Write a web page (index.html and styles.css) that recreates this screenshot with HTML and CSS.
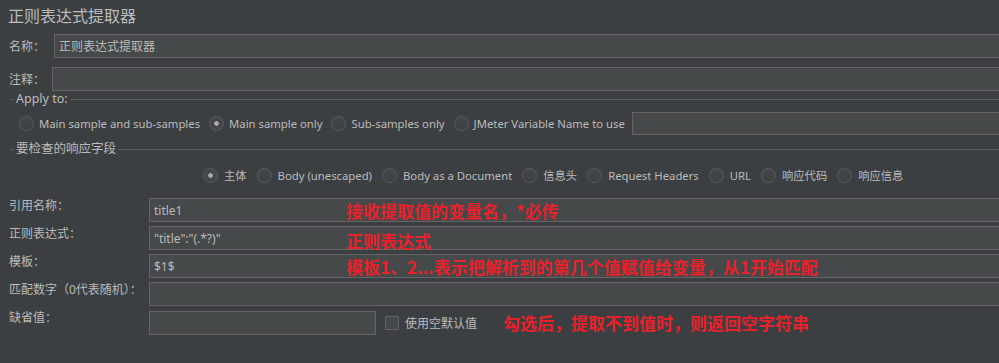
FILE: index.html
```html
<!DOCTYPE html>
<html lang="zh-CN">
<head>
    <meta charset="UTF-8">
    <title>正则表达式提取器</title>
    <link rel="stylesheet" href="styles.css">
</head>
<body>
    <div class="panel">
        <h1 class="title">正则表达式提取器</h1>

        <div class="name-row">
            <label>名称：</label>
            <input class="field" type="text" value="正则表达式提取器">
        </div>
        <div class="name-row comment">
            <label>注释：</label>
            <input class="field" type="text">
        </div>

        <fieldset class="group">
            <legend>Apply to:</legend>
            <div class="radio-row apply">
                <label class="radio"><input type="radio" name="apply">Main sample and sub-samples</label>
                <label class="radio"><input type="radio" name="apply" checked>Main sample only</label>
                <label class="radio"><input type="radio" name="apply">Sub-samples only</label>
                <label class="radio"><input type="radio" name="apply">JMeter Variable Name to use</label>
                <input class="field var-name" type="text">
            </div>
        </fieldset>

        <fieldset class="group">
            <legend>要检查的响应字段</legend>
            <div class="radio-row fields">
                <label class="radio"><input type="radio" name="field" checked>主体</label>
                <label class="radio"><input type="radio" name="field">Body (unescaped)</label>
                <label class="radio"><input type="radio" name="field">Body as a Document</label>
                <label class="radio"><input type="radio" name="field">信息头</label>
                <label class="radio"><input type="radio" name="field">Request Headers</label>
                <label class="radio"><input type="radio" name="field">URL</label>
                <label class="radio"><input type="radio" name="field">响应代码</label>
                <label class="radio"><input type="radio" name="field">响应信息</label>
            </div>
        </fieldset>

        <div class="form">
            <label>引用名称：</label>
            <div class="cell">
                <input class="field" type="text" value="title1">
                <span class="note">接收提取值的变量名，*必传</span>
            </div>

            <label>正则表达式：</label>
            <div class="cell">
                <input class="field" type="text" value='"title":"(.*?)"'>
                <span class="note low">正则表达式</span>
            </div>

            <label>模板：</label>
            <div class="cell">
                <input class="field" type="text" value="$1$">
                <span class="note">模板1、2...表示把解析到的第几个值赋值给变量，从1开始匹配</span>
            </div>

            <label>匹配数字（0代表随机）：</label>
            <div class="cell">
                <input class="field" type="text">
            </div>

            <label>缺省值：</label>
            <div class="cell default-row">
                <input class="field short" type="text">
                <label class="check"><input type="checkbox">使用空默认值</label>
                <span class="hint">勾选后，提取不到值时，则返回空字符串</span>
            </div>
        </div>
    </div>
</body>
</html>
```

FILE: styles.css
```css
* {
    margin: 0;
    padding: 0;
    box-sizing: border-box;
}

body {
    background: #3c3f41;
    color: #bbbbbb;
    font-family: "Noto Sans", "Noto Sans CJK SC", sans-serif;
    font-size: 12px;
    overflow: hidden;
}

.panel {
    width: 1004px;
}

.title {
    font-size: 16px;
    font-weight: normal;
    line-height: 20px;
    padding: 6px 0 0 8px;
    height: 34px;
}

.field {
    height: 24px;
    background: #45494a;
    border: 1px solid #646464;
    color: #bbbbbb;
    font-family: inherit;
    font-size: 12px;
    padding: 0 4px;
    outline: none;
}

.name-row {
    display: flex;
    align-items: center;
    padding-left: 9px;
}

.name-row label {
    width: 45px;
}

.name-row .field {
    flex: 1;
}

.name-row.comment {
    margin-top: 9px;
}

.name-row.comment label {
    width: 43px;
}

.group {
    border: 0;
    border-top: 1px solid #5b5e60;
    margin-left: 10px;
    padding: 0;
}

.group legend {
    margin-left: 4px;
    padding: 0 2px;
    line-height: 16px;
    font-size: 12.5px;
}

.radio-row {
    display: flex;
    align-items: center;
    height: 24px;
    font-size: 11.3px;
}

.radio-row.apply {
    margin-top: 4px;
    padding-left: 9px;
    gap: 9px;
}

.radio-row.apply .radio {
    gap: 5px;
}

.radio-row.fields {
    margin-top: 6px;
    padding-left: 193px;
    gap: 10px;
}

.group + .group {
    margin-top: 6px;
}

.radio {
    display: flex;
    align-items: center;
    gap: 6px;
    white-space: nowrap;
}

.radio input {
    appearance: none;
    width: 15px;
    height: 15px;
    border-radius: 50%;
    border: 1px solid #5a5d5f;
    background: linear-gradient(#43474a, #3d4042);
}

.radio input:checked {
    background: radial-gradient(circle, #a9abad 0, #a9abad 2px, #43474a 2.6px);
}

.var-name {
    flex: 1;
    height: 23px;
    margin-left: -2px;
}

.form {
    display: grid;
    grid-template-columns: 140px 1fr;
    row-gap: 4px;
    margin-top: 11px;
    padding-left: 9px;
}

.form > label {
    line-height: 16px;
    align-self: start;
    white-space: nowrap;
}

.cell {
    position: relative;
    display: flex;
    align-items: center;
}

.cell .field {
    flex: 1;
}

.note {
    position: absolute;
    left: 197px;
    top: 50%;
    transform: translateY(-50%);
    color: #e8212b;
    font-family: "Noto Sans CJK SC", sans-serif;
    font-size: 17px;
    font-weight: bold;
    white-space: nowrap;
    pointer-events: none;
}

.note.low {
    margin-top: 2px;
}

.cell .field.short {
    flex: none;
    width: 227px;
}

.check {
    display: flex;
    align-items: center;
    gap: 6px;
    margin-left: 9px;
    white-space: nowrap;
}

.check input {
    appearance: none;
    width: 14px;
    height: 14px;
    border: 1px solid #646464;
    background: #43494a;
    border-radius: 1px;
}

.hint {
    margin-left: 26px;
    color: #e8212b;
    font-family: "Noto Sans CJK SC", sans-serif;
    font-size: 17px;
    font-weight: bold;
    white-space: nowrap;
}
```
